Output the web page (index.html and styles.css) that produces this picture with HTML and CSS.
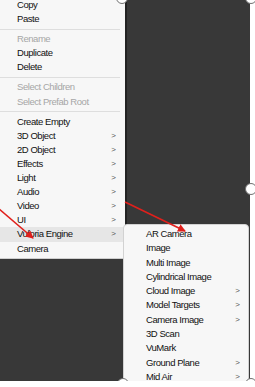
FILE: index.html
```html
<!DOCTYPE html>
<html lang="en">
<head>
    <meta charset="UTF-8">
    <meta name="viewport" content="width=device-width, initial-scale=1.0">
    <title>Hierarchy Context Menu</title>
    <link rel="stylesheet" href="styles.css">
</head>
<body>
    <div class="stage">
        <ul class="menu main-menu">
            <li class="item">Copy</li>
            <li class="item">Paste</li>
            <li class="sep"></li>
            <li class="item disabled">Rename</li>
            <li class="item">Duplicate</li>
            <li class="item">Delete</li>
            <li class="sep"></li>
            <li class="item disabled">Select Children</li>
            <li class="item disabled">Select Prefab Root</li>
            <li class="sep"></li>
            <li class="item">Create Empty</li>
            <li class="item has-sub">3D Object <span class="chev">&gt;</span></li>
            <li class="item has-sub">2D Object <span class="chev">&gt;</span></li>
            <li class="item has-sub">Effects <span class="chev">&gt;</span></li>
            <li class="item has-sub">Light <span class="chev">&gt;</span></li>
            <li class="item has-sub">Audio <span class="chev">&gt;</span></li>
            <li class="item has-sub">Video <span class="chev">&gt;</span></li>
            <li class="item has-sub">UI <span class="chev">&gt;</span></li>
            <li class="item has-sub active">Vuforia Engine <span class="chev">&gt;</span></li>
            <li class="item">Camera</li>
        </ul>

        <!-- Vuforia Engine submenu -->
        <ul class="menu sub-menu">
            <li class="item">AR Camera</li>
            <li class="item">Image</li>
            <li class="item">Multi Image</li>
            <li class="item">Cylindrical Image</li>
            <li class="item has-sub">Cloud Image <span class="chev">&gt;</span></li>
            <li class="item has-sub">Model Targets <span class="chev">&gt;</span></li>
            <li class="item has-sub">Camera Image <span class="chev">&gt;</span></li>
            <li class="item">3D Scan</li>
            <li class="item">VuMark</li>
            <li class="item has-sub">Ground Plane <span class="chev">&gt;</span></li>
            <li class="item has-sub">Mid Air <span class="chev">&gt;</span></li>
        </ul>

        <svg class="overlay" width="255" height="387" viewBox="0 0 255 387">
            <defs>
                <marker id="head" markerWidth="8" markerHeight="8" refX="7" refY="4" orient="auto" markerUnits="userSpaceOnUse">
                    <path d="M0,0 L8,4 L0,8 Z" fill="#e0201c"/>
                </marker>
            </defs>
            <line x1="-2" y1="210" x2="33" y2="240" stroke="#e0201c" stroke-width="1.6" marker-end="url(#head)"/>
            <line x1="125" y1="204" x2="185" y2="233" stroke="#e0201c" stroke-width="1.6" marker-end="url(#head)"/>
            <g class="handles">
                <circle cx="122" cy="0" r="5.5"/>
                <circle cx="251" cy="0" r="5.5"/>
                <circle cx="251" cy="191" r="5.5"/>
                <circle cx="123" cy="386" r="5.5"/>
                <circle cx="251" cy="386" r="5.5"/>
            </g>
        </svg>
    </div>
</body>
</html>
```

FILE: styles.css
```css
body {
    margin: 0;
    padding: 0;
    background-color: #ffffff;
    font-family: "Liberation Sans", Arial, sans-serif;
    overflow: hidden;
}

.stage {
    position: relative;
    width: 250px;
    height: 383px;
    background-color: #383838;
}

.menu {
    list-style: none;
    margin: 0;
    padding: 0;
    background-color: #f7f7f7;
    font-size: 9.5px;
    letter-spacing: -0.45px;
    color: #111111;
}

.item {
    display: flex;
    justify-content: space-between;
    align-items: center;
    height: 14.1px;
    line-height: 14.1px;
    white-space: nowrap;
}

.item.disabled {
    color: #a6a6a6;
}

.item.active {
    background-color: #e6e6e6;
}

.chev {
    font-size: 8px;
    color: #555555;
    letter-spacing: 0;
}

.sep {
    height: 6px;
    display: flex;
    align-items: center;
}

.sep::after {
    content: "";
    flex: 1;
    height: 1px;
    margin-right: 5px;
    background-color: #dedede;
}

.main-menu {
    width: 125px;
    margin-top: -2px;
    padding-bottom: 2px;
    border-bottom: 1px solid #cfcfcf;
    box-shadow: 2px 0 0 #232323;
}

.main-menu .item {
    padding: 0 9px 0 17px;
}

.sub-menu {
    position: absolute;
    left: 123px;
    top: 226px;
    width: 126px;
    box-sizing: border-box;
    padding: 2px 0 0;
    border: 1px solid #d2d2d2;
    border-radius: 4px;
}

.sub-menu .item {
    height: 14.3px;
    line-height: 14.3px;
    padding: 0 8px 0 22px;
}

.overlay {
    position: absolute;
    left: 0;
    top: 0;
    overflow: visible;
}

.handles circle {
    fill: #ffffff;
    stroke: #707070;
    stroke-width: 1;
}
```
